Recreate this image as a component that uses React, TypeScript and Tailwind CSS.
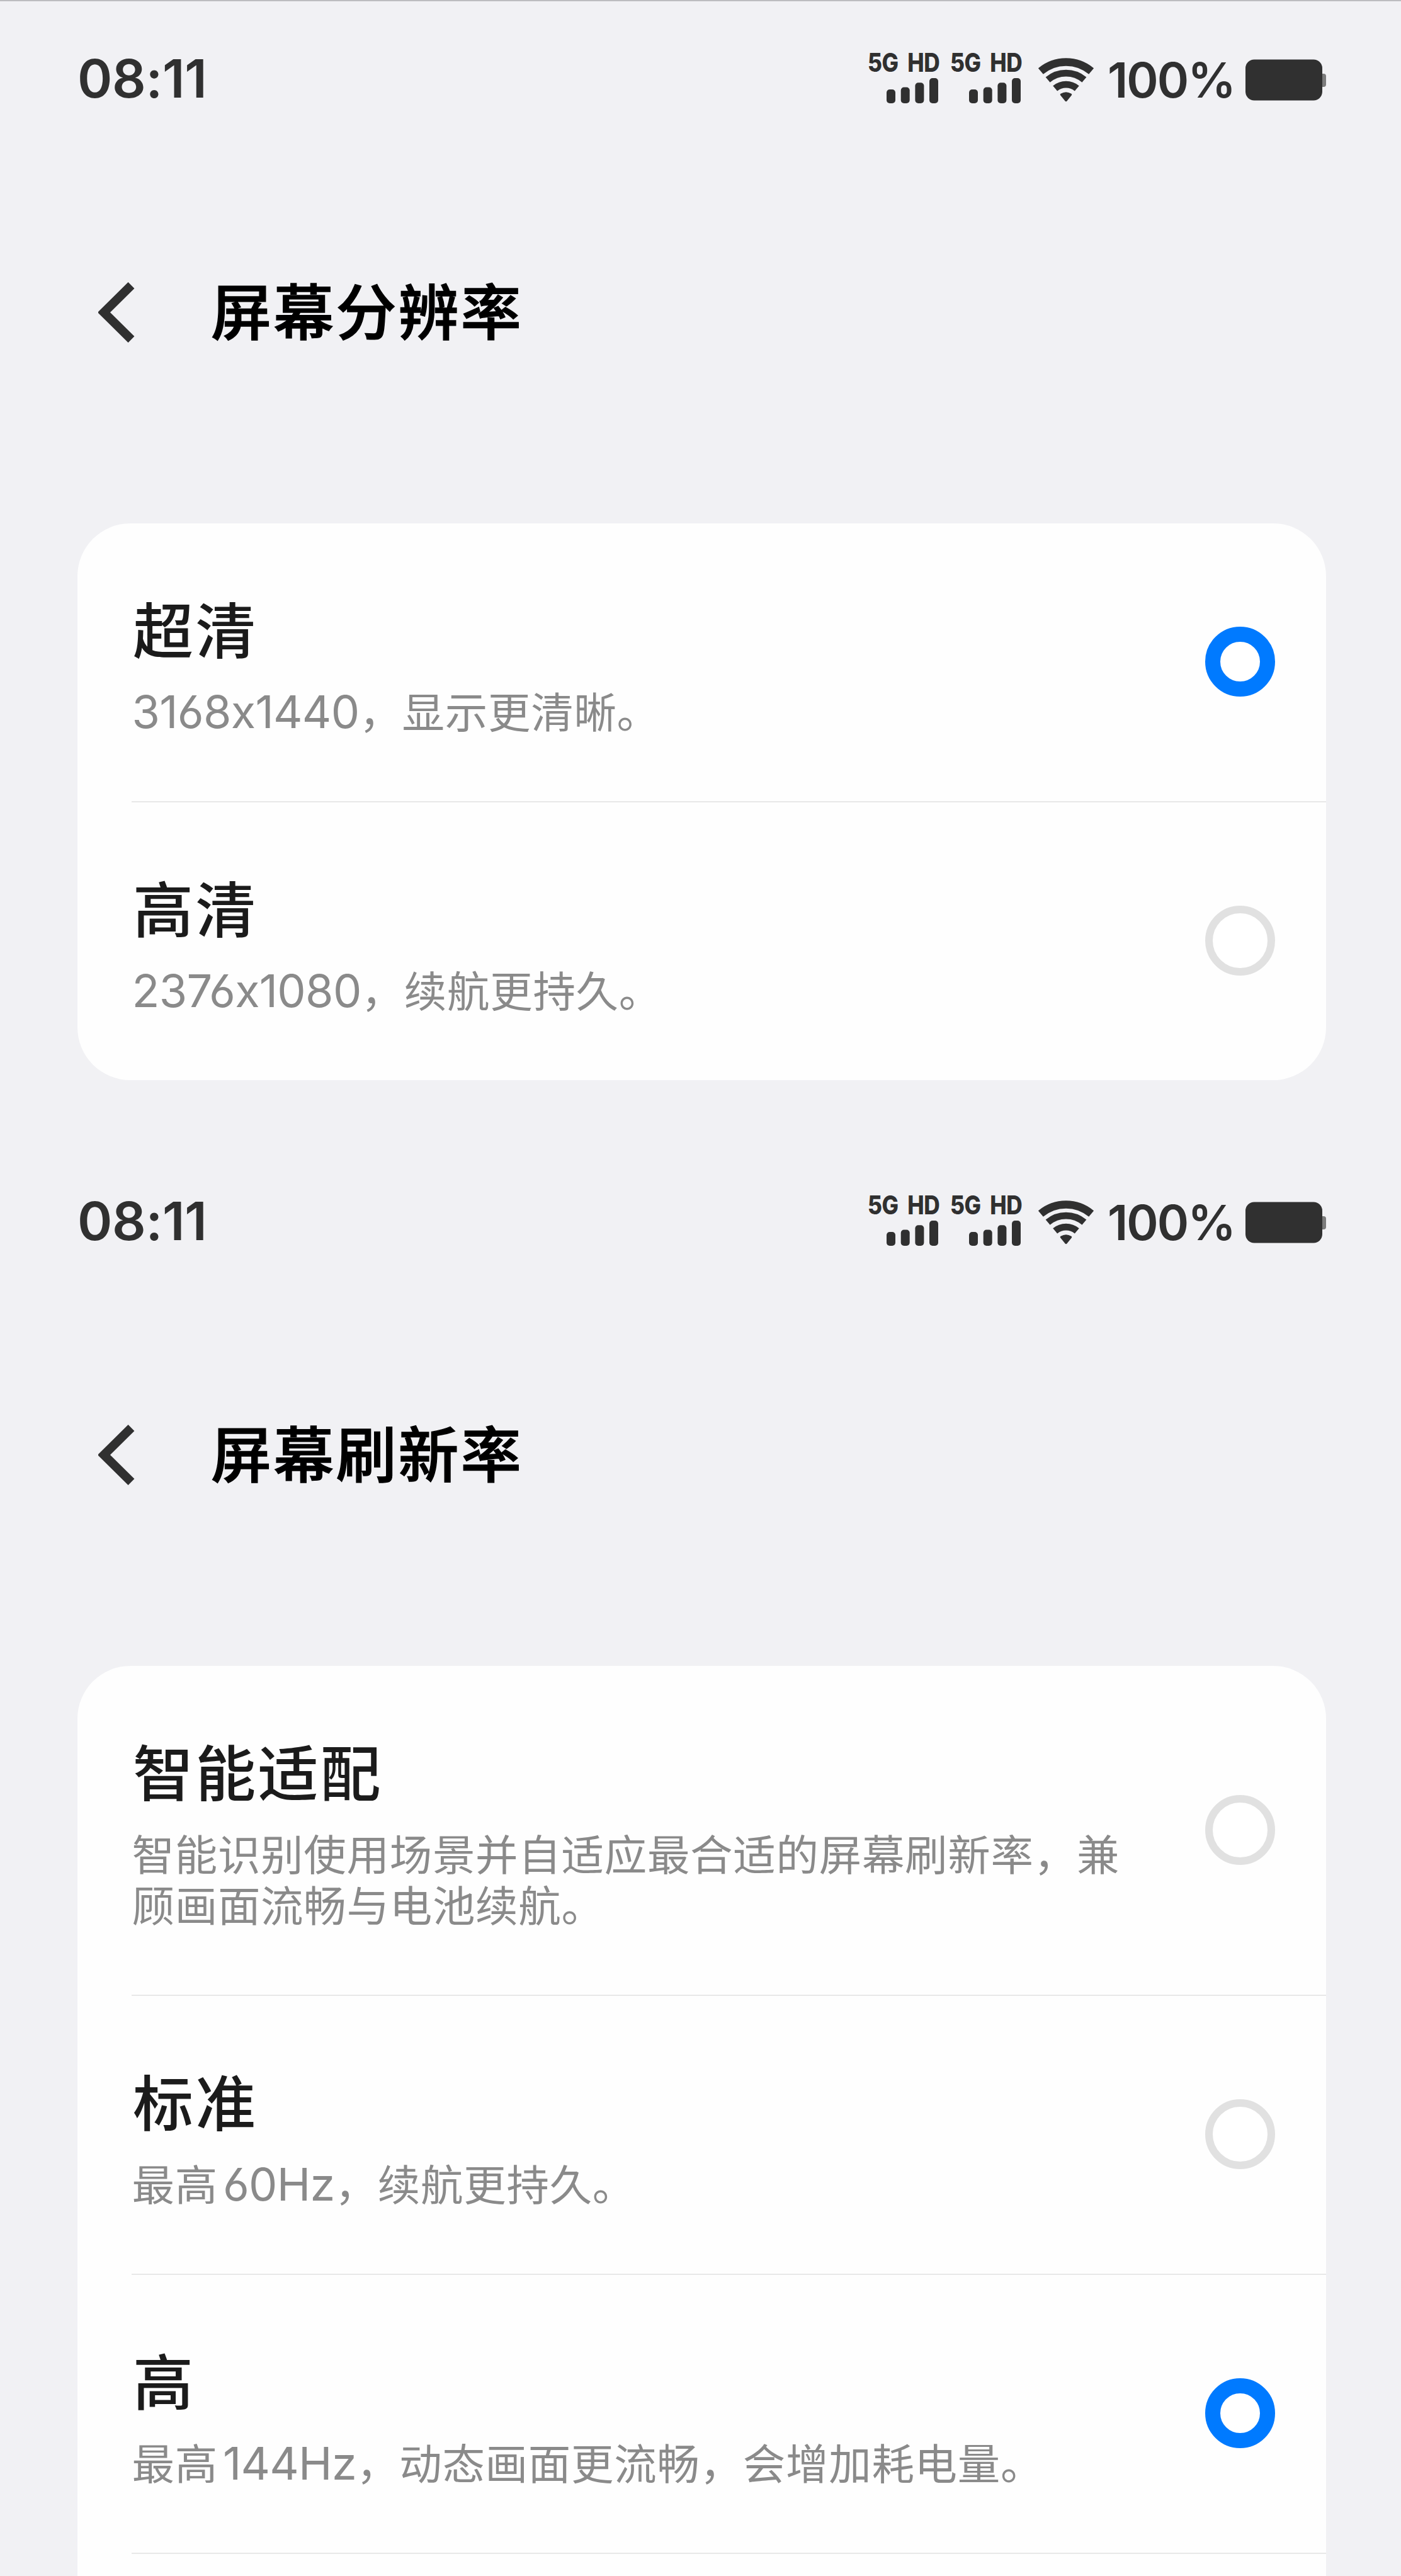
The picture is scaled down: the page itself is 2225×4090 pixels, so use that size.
import { useState } from "react";
import { clsx } from "clsx";

type Option = { id: string; title: string; description: string };

const resolutionOptions: Option[] = [
  { id: "uhd", title: "超清", description: "3168x1440，显示更清晰。" },
  { id: "hd", title: "高清", description: "2376x1080，续航更持久。" },
];

const refreshRateOptions: Option[] = [
  {
    id: "auto",
    title: "智能适配",
    description: "智能识别使用场景并自适应最合适的屏幕刷新率，兼顾画面流畅与电池续航。",
  },
  { id: "standard", title: "标准", description: "最高60Hz，续航更持久。" },
  { id: "high", title: "高", description: "最高144Hz，动态画面更流畅，会增加耗电量。" },
];

function SignalIcon() {
  return (
    <svg width="82" height="40" viewBox="0 0 82 40" fill="currentColor">
      <rect x="0" y="18" width="14" height="22" rx="5" />
      <rect x="22.7" y="14.5" width="14" height="25.5" rx="5" />
      <rect x="45.4" y="7.2" width="14" height="32.8" rx="5" />
      <rect x="68" y="0" width="14" height="40" rx="5" />
    </svg>
  );
}

function WifiIcon() {
  return (
    <svg width="88" height="70" viewBox="0 0 88 70" fill="none" stroke="currentColor">
      <path d="M3.8 21.1A62.6 62.6 0 0 1 84.2 21.1" strokeWidth="12.4" />
      <path d="M15.1 34.6A44.9 44.9 0 0 1 72.9 34.6" strokeWidth="10.8" />
      <path d="M26.7 48.4A26.9 26.9 0 0 1 61.3 48.4" strokeWidth="10.8" />
      <path
        d="M36.5 58.2Q44 53.6 51.5 58.2L44 67.5Z"
        fill="currentColor"
        strokeWidth="3.5"
        strokeLinejoin="round"
      />
    </svg>
  );
}

function BatteryIcon() {
  return (
    <svg width="128" height="66" viewBox="0 0 128 66">
      <rect x="118" y="23" width="10" height="21" rx="4" fill="#7b7b7b" />
      <rect x="0" y="0.5" width="122" height="65" rx="14" fill="currentColor" />
    </svg>
  );
}

function Carrier() {
  return (
    <div className="flex flex-col items-end w-[110px] -mt-[3px]">
      <div className="flex justify-between self-start w-[133px] -ml-[2px] origin-left scale-x-[0.86] h-[30px] mb-[10px] text-[41px] leading-[30px] font-extrabold tracking-[-0.5px] whitespace-nowrap">
        <span>5G</span>
        <span>HD</span>
      </div>
      <SignalIcon />
    </div>
  );
}

function StatusBar() {
  return (
    <div className="flex items-center justify-between h-[250px] pl-[123px] pr-[119px] text-[#303030]">
      <span className="text-[84px] leading-none font-semibold tracking-[-0.3px]">08:11</span>
      <div className="flex items-center h-[80px]">
        <Carrier />
        <div className="w-[21.5px]" />
        <Carrier />
        <div className="flex items-center ml-[28px] mt-[4px]">
          <WifiIcon />
          <span className="w-[224px] text-right text-[76.5px] leading-none font-semibold tracking-[-2px]">100%</span>
          <div className="w-[17px]" />
          <BatteryIcon />
        </div>
      </div>
    </div>
  );
}

function TitleBar({ title }: { title: string }) {
  return (
    <div className="flex items-center h-[492px] pl-[156px] mb-[89px]">
      <button className="cursor-pointer">
        <svg width="58" height="98" viewBox="0 0 58 98" fill="none" stroke="#303030">
          <path d="M52.5 6L9 49L52.5 92" strokeWidth="14" />
        </svg>
      </button>
      <h1 className="ml-[121px] text-[96px] leading-none font-medium tracking-[3.2px] text-black [-webkit-text-stroke:1.4px_black]">
        {title}
      </h1>
    </div>
  );
}

function Radio({ checked }: { checked: boolean }) {
  return (
    <span
      className={clsx(
        "block shrink-0 size-[111px] mb-[22px] rounded-full bg-white",
        checked ? "border-[24.5px] border-[#007aff]" : "border-[12.5px] border-[#e1e1e1]",
      )}
    />
  );
}

// Latin runs are set a bit larger than the Chinese text around them
function Description({ text }: { text: string }) {
  const parts = text.split(/([0-9A-Za-z]+)/).filter(Boolean);
  return (
    <p className="-ml-[1.5px] text-[67.5px] leading-[81px] tracking-[0.7px] text-[#8a8a8a]">
      {parts.map((part, i) =>
        /^[0-9A-Za-z]/.test(part) ? (
          <span key={i} className={clsx("text-[72px] leading-[0] tracking-[-0.7px]", i > 0 && "ml-2")}>
            {part}
          </span>
        ) : (
          part
        ),
      )}
    </p>
  );
}

function OptionCard({
  options,
  value,
  onChange,
  open,
}: {
  options: Option[];
  value: string;
  onChange: (id: string) => void;
  open?: boolean;
}) {
  return (
    <div
      className={clsx(
        "ml-[122.5px] w-[1983px] bg-[#fefefe]",
        open ? "rounded-t-[84px] h-[1446px]" : "rounded-[84px]",
      )}
    >
      {options.map((opt, i) => (
        <div key={opt.id} className="pl-[86.5px]">
          <div
            onClick={() => onChange(opt.id)}
            className="flex items-center justify-between pt-[120px] pb-[100px] pr-[81px] cursor-pointer"
          >
            <div className="w-[1582px] pl-[2px]">
              <h2 className="mb-[38px] text-[96px] leading-[102px] font-medium tracking-[3.2px] text-[#1b1b1b]">
                {opt.title}
              </h2>
              <Description text={opt.description} />
            </div>
            <Radio checked={value === opt.id} />
          </div>
          {(open || i < options.length - 1) && <div className="h-[2px] bg-[#e8e8e8]" />}
        </div>
      ))}
    </div>
  );
}

export default function App() {
  const [resolution, setResolution] = useState("uhd");
  const [refreshRate, setRefreshRate] = useState("high");

  return (
    <div className="relative w-[2225px] h-[4090px] overflow-hidden bg-[#f1f1f4] font-['Inter','Noto_Sans_CJK_SC',sans-serif] [font-feature-settings:'cv03']">
      <div className="absolute inset-x-0 top-0 h-[1.5px] bg-[#bcbcbf]" />
      <section className="h-[1814px]">
        <StatusBar />
        <TitleBar title="屏幕分辨率" />
        <OptionCard options={resolutionOptions} value={resolution} onChange={setResolution} />
      </section>
      <section>
        <StatusBar />
        <TitleBar title="屏幕刷新率" />
        <OptionCard options={refreshRateOptions} value={refreshRate} onChange={setRefreshRate} open />
      </section>
    </div>
  );
}
